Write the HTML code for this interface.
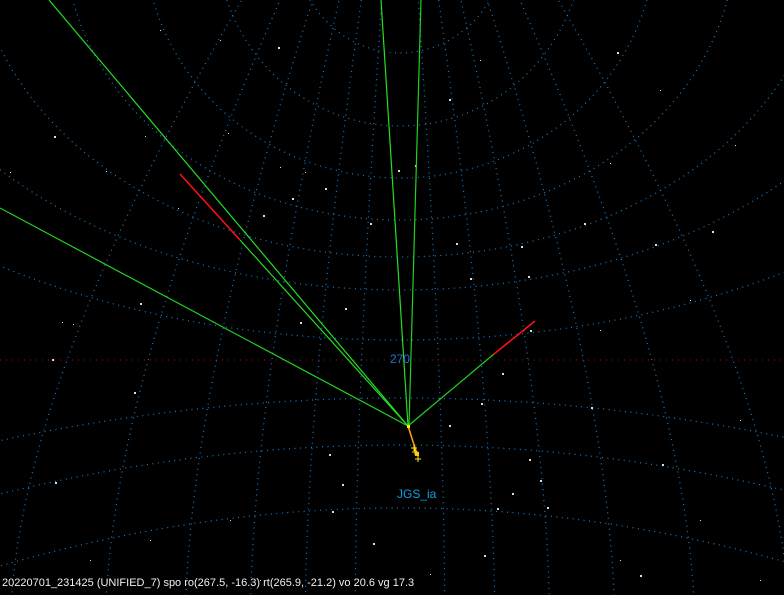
<!DOCTYPE html>
<html><head><meta charset="utf-8"><style>
html,body{margin:0;padding:0;background:#000;width:784px;height:595px;overflow:hidden;position:relative}
svg{position:absolute;left:0;top:0;overflow:hidden}
.t{position:absolute;font-family:"Liberation Sans",sans-serif;font-size:12px;white-space:nowrap;line-height:14px}
</style></head><body>
<svg width="784" height="595" viewBox="0 0 784 595">
<g fill="none" stroke="#1080d8" stroke-width="1.2" stroke-dasharray="1 4.5">
<ellipse cx="400" cy="-60" rx="106" ry="113"/>
<ellipse cx="400" cy="-60" rx="183" ry="186"/>
<ellipse cx="400" cy="-60" rx="255" ry="238"/>
<ellipse cx="400" cy="-60" rx="335" ry="280"/>
<ellipse cx="400" cy="-60" rx="425" ry="317"/>
<ellipse cx="400" cy="-60" rx="530" ry="350"/>
<ellipse cx="400" cy="-60" rx="690" ry="400"/>
<path d="M-20 445 Q400 351 820 445"/>
<path d="M-20 499 Q400 391 820 499"/>
<path d="M-20 572 Q400 444 820 572"/>
<path d="M400 -250 Q490 900 400 1000"/>
<path d="M400 -250 Q310 900 400 1000"/>
<path d="M400 -250 Q590 900 400 1000"/>
<path d="M400 -250 Q210 900 400 1000"/>
<path d="M400 -250 Q700 900 400 1000"/>
<path d="M400 -250 Q100 900 400 1000"/>
<path d="M400 -250 Q830 900 400 1000"/>
<path d="M400 -250 Q-30 900 400 1000"/>
<path d="M400 -250 Q990 900 400 1000"/>
<path d="M400 -250 Q-190 900 400 1000"/>
<path d="M400 -250 Q1180 900 400 1000"/>
<path d="M400 -250 Q-380 900 400 1000"/>
</g>
<line x1="0" y1="360" x2="784" y2="360" stroke="#a01010" stroke-width="1" stroke-dasharray="1 5"/>
<g fill="#ddd">
<rect x="278" y="47" width="2" height="2"/><rect x="449" y="99" width="2" height="2"/><rect x="617" y="52" width="2" height="2"/>
<rect x="54" y="136" width="2" height="2"/><rect x="325" y="188" width="2" height="2"/><rect x="292" y="198" width="2" height="2"/>
<rect x="370" y="223" width="2" height="2"/><rect x="263" y="215" width="2" height="2"/><rect x="584" y="223" width="2" height="2"/>
<rect x="655" y="244" width="2" height="2"/><rect x="712" y="231" width="2" height="2"/><rect x="521" y="246" width="2" height="2"/>
<rect x="470" y="278" width="2" height="2"/><rect x="456" y="243" width="2" height="2"/><rect x="415" y="165" width="2" height="2"/>
<rect x="398" y="170" width="2" height="2"/><rect x="528" y="276" width="2" height="2"/><rect x="280" y="167" width="1" height="1"/>
<rect x="305" y="172" width="1" height="1"/><rect x="610" y="163" width="1" height="1"/><rect x="300" y="322" width="2" height="2"/>
<rect x="345" y="308" width="2" height="2"/><rect x="52" y="359" width="2" height="2"/><rect x="134" y="392" width="2" height="2"/>
<rect x="449" y="425" width="2" height="2"/><rect x="481" y="403" width="2" height="2"/><rect x="502" y="373" width="2" height="2"/>
<rect x="591" y="407" width="2" height="2"/><rect x="662" y="464" width="2" height="2"/><rect x="329" y="454" width="2" height="2"/>
<rect x="529" y="459" width="2" height="2"/><rect x="540" y="480" width="2" height="2"/><rect x="55" y="482" width="2" height="2"/>
<rect x="342" y="484" width="2" height="2"/><rect x="512" y="493" width="2" height="2"/><rect x="497" y="508" width="2" height="2"/>
<rect x="332" y="511" width="2" height="2"/><rect x="547" y="507" width="2" height="2"/><rect x="484" y="555" width="2" height="2"/>
<rect x="373" y="543" width="2" height="2"/><rect x="530" y="330" width="2" height="2"/><rect x="140" y="303" width="2" height="2"/>
<rect x="106" y="171" width="1" height="1"/>
<rect x="178" y="208" width="1" height="1"/><rect x="145" y="136" width="1" height="1"/><rect x="10" y="172" width="1" height="1"/>
<rect x="62" y="322" width="1" height="1"/><rect x="73" y="324" width="1" height="1"/><rect x="228" y="133" width="1" height="1"/>
<rect x="660" y="90" width="1" height="1"/><rect x="735" y="145" width="1" height="1"/><rect x="690" y="300" width="1" height="1"/>
<rect x="740" y="420" width="1" height="1"/><rect x="700" y="520" width="1" height="1"/><rect x="620" y="560" width="1" height="1"/>
<rect x="150" y="540" width="1" height="1"/><rect x="230" y="520" width="1" height="1"/><rect x="90" y="560" width="1" height="1"/>
<rect x="260" y="580" width="1" height="1"/><rect x="760" y="580" width="1" height="1"/><rect x="600" y="330" width="1" height="1"/>
<rect x="480" y="60" width="1" height="1"/><rect x="220" y="40" width="1" height="1"/><rect x="160" y="30" width="1" height="1"/>
<rect x="640" y="575" width="2" height="2"/><rect x="430" y="574" width="1" height="1"/>
</g>
<g fill="none" stroke-width="1.2">
<line x1="49" y1="0" x2="408" y2="426" stroke="#22e022"/>
<line x1="0" y1="208" x2="408" y2="426" stroke="#22d022"/>
<line x1="240" y1="240" x2="408" y2="426" stroke="#22e022"/>
<line x1="180" y1="174" x2="240" y2="240" stroke="#ff1010" stroke-width="1.6"/>
<line x1="408" y1="426" x2="494" y2="354" stroke="#22d022"/>
<line x1="494" y1="354" x2="535" y2="321" stroke="#ff1010" stroke-width="1.6"/>
<line x1="381" y1="0" x2="408" y2="426" stroke="#22e022"/>
<line x1="421" y1="0" x2="409" y2="426" stroke="#22d022"/>
<line x1="408" y1="426" x2="417" y2="454" stroke="#ff9a10" stroke-width="1.6"/>
</g>
<g stroke="#ffee10" stroke-width="1">
<path d="M411 448h6M414 445v6M412 452h6M415 449v6M415 459h6M418 456v6"/>
</g>
<rect x="407" y="425" width="3" height="3" fill="#ffee10"/>
<rect x="415" y="452" width="4" height="4" fill="#ffcc00"/>
</svg>
<div class="t" style="left:390px;top:352px;color:#1a78d0">270</div>
<div class="t" style="left:397px;top:487px;color:#10a0e0">JGS_ia</div>
<div class="t" style="left:2px;top:576px;color:#f0f0f0;font-size:11px">20220701_231425 (UNIFIED_7) spo ro(267.5, -16.3) rt(265.9, -21.2) vo 20.6 vg 17.3</div>
</body></html>
